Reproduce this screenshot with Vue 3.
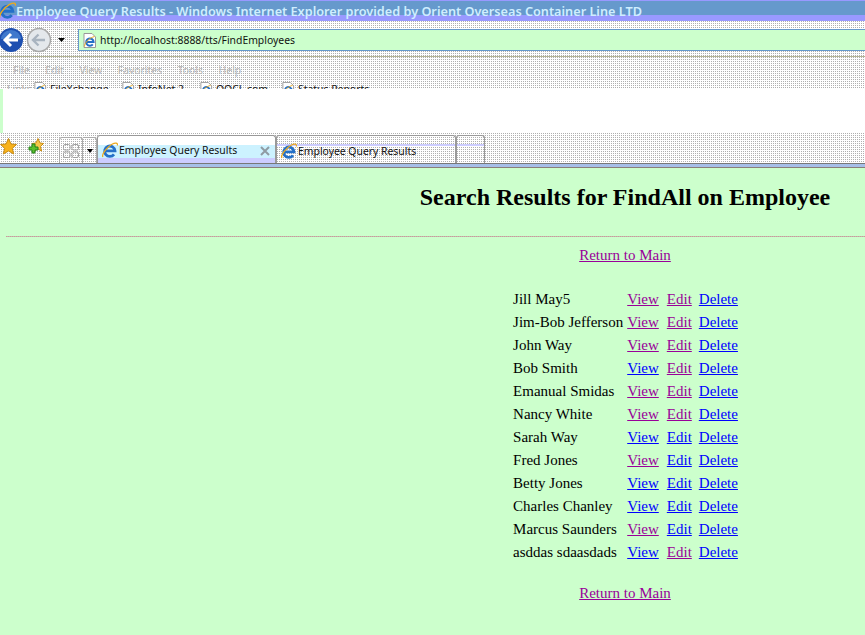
<script setup>
const B = '#0000ff'
const V = '#990099'
const rows = [
  ['Jill May5', V, V],
  ['Jim-Bob Jefferson', V, V],
  ['John Way', V, V],
  ['Bob Smith', B, V],
  ['Emanual Smidas', V, V],
  ['Nancy White', V, V],
  ['Sarah Way', B, B],
  ['Fred Jones', V, B],
  ['Betty Jones', B, B],
  ['Charles Chanley', B, B],
  ['Marcus Saunders', V, B],
  ['asddas sdaasdads', B, V]
]
const menus = ['File', 'Edit', 'View', 'Favorites', 'Tools', 'Help']
const links = ['FileXchange', 'InfoNet 2', 'OOCL.com', 'Status Reports']
</script>

<template>
  <div class="page">
    <svg class="defs" width="0" height="0">
      <defs>
        <symbol id="ie" viewBox="0 0 16 16">
          <path d="M3 8.800H13A5.200 5.200 0 1 0 12 12.300" fill="none" stroke="#2470c8" stroke-width="2.800" />
          <path d="M.8 15C-.5 12 5 5 10 2.200C13 .6 16 .5 15.500 3.500" fill="none" stroke="#eba91e" stroke-width="1.300" />
        </symbol>
        <symbol id="doc" viewBox="0 0 15 15">
          <path d="M2 .5H10L13.500 4V14.500H2Z" fill="#fff" stroke="#999" />
          <path d="M3.800 9H11.600A3.700 3.700 0 1 0 10.800 11.400" fill="none" stroke="#2470c8" stroke-width="2" />
          <path d="M2.500 13.500C2.500 10 7 5 12.500 3.500" fill="none" stroke="#eba91e" stroke-width="1" />
        </symbol>
      </defs>
    </svg>

    <header class="titlebar">
      <svg class="title-ie" width="17" height="17"><use href="#ie" /></svg>
      <span class="title-text">Employee Query Results - Windows Internet Explorer provided by Orient Overseas Container Line LTD</span>
    </header>

    <div class="navrow">
      <svg class="navbtns" width="68" height="28" viewBox="0 0 68 28">
        <circle cx="39" cy="14" r="11.500" fill="#e4e8ec" stroke="#a8a8a8" stroke-width="1.500" />
        <path d="M33 14H45M38.500 8.500L33 14L38.500 19.500" fill="none" stroke="#a9b4c0" stroke-width="2.400" />
        <circle cx="11" cy="14" r="12" fill="#1d4fb0" />
        <path d="M1 13A10 9 0 0 1 21 13Z" fill="#4f8ad8" opacity=".7" />
        <path d="M5 14H18M11 8L5 14L11 20" fill="none" stroke="#fff" stroke-width="3" />
        <path d="M58 12H65L61.500 16Z" fill="#000" />
      </svg>
      <div class="address">
        <svg width="15" height="15"><use href="#doc" /></svg>
        <span>http://localhost:8888/tts/FindEmployees</span>
      </div>
    </div>

    <div class="menurow">
      <nav class="menus">
        <span v-for="m in menus" :key="m">{{ m }}</span>
      </nav>
      <div class="linksbar">
        <span class="links-label">Links</span>
        <span v-for="l in links" :key="l" class="linkitem">
          <svg width="14" height="14"><use href="#doc" /></svg>{{ l }}
        </span>
      </div>
    </div>

    <div class="blank"></div>

    <div class="tabrow">
      <svg class="star" width="17" height="17" viewBox="0 0 17 17">
        <path d="M8.500 .5L11 6L16.500 6.500L12.300 10.300L13.700 16L8.500 13L3.300 16L4.700 10.300L.5 6.500L6 6Z" fill="#f7b21c" stroke="#c98a10" />
      </svg>
      <svg class="star star2" width="17" height="17" viewBox="0 0 17 17">
        <path d="M11 .5L13 5L16.500 5.500L13.500 8.500L14.500 13L11 11L7 13L8 8.500L5 5.500L9 5Z" fill="#f7c64a" stroke="#c98a10" />
        <path d="M5 6V9H2V12H5V15H8V12H11V9H8V6Z" fill="#5cc02c" stroke="#23801a" />
      </svg>
      <div class="quick">
        <svg width="16" height="14" viewBox="0 0 16 14">
          <g fill="none" stroke="#a0a0a0">
            <rect x=".5" y=".5" width="6.500" height="5.500" rx="1.500" />
            <rect x="9" y=".5" width="6.500" height="5.500" rx="1.500" />
            <rect x=".5" y="8" width="6.500" height="5.500" rx="1.500" />
            <rect x="9" y="8" width="6.500" height="5.500" rx="1.500" />
          </g>
        </svg>
      </div>
      <div class="quick-drop"><i></i></div>
      <div class="tab active">
        <svg width="16" height="16"><use href="#ie" /></svg>
        <span>Employee Query Results</span>
        <svg class="close" width="10" height="10" viewBox="0 0 10 10">
          <path d="M1 1L9 9M9 1L1 9" stroke="#8f9ba3" stroke-width="2" />
        </svg>
      </div>
      <div class="tab inactive">
        <svg width="16" height="16"><use href="#ie" /></svg>
        <span>Employee Query Results</span>
      </div>
      <div class="tab newtab"></div>
    </div>
    <div class="chrome-edge"></div>

    <main class="content">
      <div class="centered">
        <h2>Search Results for FindAll on Employee</h2>
      </div>
      <hr class="rule" />
      <div class="centered">
        <a class="ret">Return to Main</a>
        <table>
          <tbody>
            <tr v-for="r in rows" :key="r[0]">
              <td>{{ r[0] }}</td>
              <td>
                <div class="actions">
                  <a :style="{ color: r[1] }">View</a>
                  <a :style="{ color: r[2] }">Edit</a>
                  <a class="del" :style="{ color: B }">Delete</a>
                </div>
              </td>
            </tr>
          </tbody>
        </table>
        <a class="ret">Return to Main</a>
      </div>
    </main>
  </div>
</template>

<style scoped>
.page {
  width: 865px;
  height: 635px;
  overflow: hidden;
  background: #ccffcc;
  font-family: "Liberation Serif", serif;
  font-size: 15px;
  color: #000;
}
.defs { display: block; height: 0; }
.titlebar {
  height: 21px;
  box-sizing: border-box;
  display: flex;
  align-items: center;
  background: linear-gradient(to bottom, #9999ff 0 1px, #6699cc 1px 15px, #9999ff 15px 21px);
  white-space: nowrap;
  overflow: hidden;
}
.title-ie { margin-left: -1px; flex: none; }
.title-text {
  font: 600 12.700px "Noto Sans", sans-serif;
  color: #cfeeff;
  padding-top: 1px;
}
.navrow, .menurow, .tabrow {
  background-color: #fff;
  background-image: conic-gradient(#b0b0b0 25%, #fff 0);
  background-size: 2px 2px;
}
.navrow {
  height: 36px;
  box-sizing: border-box;
  border-bottom: 1px solid #b4b494;
  display: flex;
  align-items: flex-start;
  position: relative;
}
.navbtns { margin-top: 5px; flex: none; }
.address {
  margin: 8px 0 0 10px;
  flex: 1;
  height: 22px;
  box-sizing: border-box;
  border: 1px solid #6699cc;
  border-right: 0;
  background: #ccffcc;
  display: flex;
  align-items: center;
  gap: 3px;
  padding-left: 3px;
  font: 10.400px "Noto Sans", sans-serif;
  color: #111;
}
.menurow {
  height: 32px;
  overflow: hidden;
  font: 10.400px "Noto Sans", sans-serif;
}
.menus {
  display: flex;
  gap: 15.600px;
  padding: 5px 0 0 13px;
  height: 16px;
  color: #b8b8b8;
  line-height: 16px;
}
.linksbar {
  display: flex;
  align-items: center;
  height: 14px;
  margin-top: 4px;
  color: #111;
  white-space: nowrap;
}
.links-label { width: 33px; padding-left: 7px; color: #aaa; box-sizing: border-box; flex: none; }
.linkitem {
  display: flex;
  align-items: center;
  gap: 3px;
  flex: none;
}
.linkitem:nth-child(2) { width: 88px; }
.linkitem:nth-child(3) { width: 78px; }
.linkitem:nth-child(4) { width: 82px; }
.blank {
  height: 44px;
  margin-left: 3px;
  background: #fff;
}
.tabrow {
  height: 31px;
  box-sizing: border-box;
  border-bottom: 1px solid #777;
  display: flex;
  align-items: flex-end;
  position: relative;
}
.star { margin: 0 0 8px 0; flex: none; }
.star2 { margin-left: 10px; }
.quick {
  margin-left: 15px;
  width: 24px;
  height: 26px;
  box-sizing: border-box;
  border: 1px solid #aaa;
  border-bottom: 0;
  border-radius: 3px 3px 0 0;
  display: flex;
  align-items: center;
  justify-content: center;
  flex: none;
}
.quick-drop {
  width: 14px;
  height: 26px;
  box-sizing: border-box;
  border: 1px solid #aaa;
  border-left: 0;
  border-bottom: 0;
  border-radius: 0 3px 0 0;
  display: flex;
  align-items: center;
  justify-content: center;
  flex: none;
}
.quick-drop i {
  width: 0;
  height: 0;
  border: 3px solid transparent;
  border-top: 4px solid #000;
  border-bottom: 0;
}
.tab {
  height: 28px;
  box-sizing: border-box;
  flex: none;
  display: flex;
  align-items: center;
  gap: 1px;
  font: 10.400px "Noto Sans", sans-serif;
  color: #111;
  border: 1px solid #999;
  border-bottom: 0;
  border-radius: 3px 3px 0 0;
}
.tab.active {
  width: 179px;
  padding: 1px 0 0 4px;
  background: linear-gradient(to bottom, #fff 0 9px, #ccf2ff 9px 22px, #ccccff 22px);
  position: relative;
}
.close { position: absolute; right: 5px; top: 10px; }
.tab.inactive {
  width: 180px;
  padding: 2px 0 0 4px;
  background: linear-gradient(to bottom, transparent 0 8px, #ccccff 8px 10px, transparent 10px);
}
.newtab {
  width: 29px;
  background: linear-gradient(to bottom, transparent 0 8px, #ccccff 8px 10px, transparent 10px);
}
.chrome-edge {
  height: 4px;
  box-sizing: border-box;
  background: #a6bfe8;
  border-bottom: 1px solid #8a8078;
}
.content { display: flow-root; }
.centered {
  margin-left: 385px;
  width: 480px;
  display: flex;
  flex-direction: column;
  align-items: center;
}
h2 {
  margin: 16px 0 0;
  font-size: 24px;
  font-weight: 700;
  line-height: 27px;
  white-space: nowrap;
}
.rule {
  margin: 25px 0 0 6px;
  height: 1px;
  border: 0;
  background: repeating-linear-gradient(to right, #cc9999 0 1px, #c0bdb0 1px 2px);
}
.ret {
  margin-top: 9px;
  color: #990099;
  text-decoration: underline;
  line-height: 19px;
}
table {
  margin-top: 22px;
  margin-left: 1px;
  border-spacing: 2px;
  white-space: nowrap;
}
td { padding: 1px; line-height: 19px; }
.actions { display: flex; gap: 8px; }
.actions a { text-decoration: underline; }
.actions .del { margin-left: -1px; }
table + .ret { margin-top: 19px; }
</style>
